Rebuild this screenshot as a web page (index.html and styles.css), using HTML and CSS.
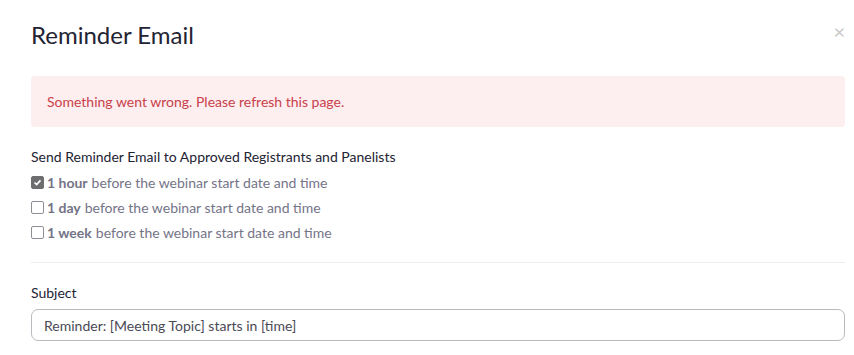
FILE: index.html
```html
<!DOCTYPE html>
<html lang="en">
<head>
    <meta charset="UTF-8">
    <title>Reminder Email</title>
    <link rel="stylesheet" href="styles.css">
</head>
<body>
    <div class="modal">
        <div class="modal-header">
            <h2 class="modal-title">Reminder Email</h2>
            <button class="close" aria-label="Close">&times;</button>
        </div>
        <div class="alert">Something went wrong. Please refresh this page.</div>

        <div class="section">
            <div class="section-label">Send Reminder Email to Approved Registrants and Panelists</div>
            <label class="check-row"><input type="checkbox" checked><b>1 hour</b> before the webinar start date and time</label>
            <label class="check-row"><input type="checkbox"><b>1 day</b> before the webinar start date and time</label>
            <label class="check-row"><input type="checkbox"><b>1 week</b> before the webinar start date and time</label>
        </div>

        <hr class="divider">

        <div class="field">
            <label class="field-label" for="subject">Subject</label>
            <input type="text" id="subject" class="text-input" value="Reminder: [Meeting Topic] starts in [time]">
        </div>
    </div>
</body>
</html>
```

FILE: styles.css
```css
body {
    margin: 0;
    background-color: white;
    font-family: Lato, "Open Sans", sans-serif;
    color: #232333;
}

.modal {
    padding: 0 9px 0 31px;
}

.modal-header {
    display: flex;
    justify-content: space-between;
    align-items: flex-start;
    padding-top: 20px;
}

.modal-title {
    margin: 0;
    font-size: 24px;
    font-weight: 400;
    line-height: 30px;
    color: #232333;
}

.close {
    border: none;
    background: none;
    padding: 0;
    margin-top: 1px;
    font-size: 20px;
    line-height: 20px;
    color: #c8c8c8;
    cursor: pointer;
    font-family: Lato, sans-serif;
}

.alert {
    margin-top: 26px;
    width: 814px;
    box-sizing: border-box;
    padding: 16px;
    background-color: #fdeeef;
    border-radius: 4px;
    color: #c9414b;
    font-size: 14px;
    line-height: 19px;
}

.section {
    margin-top: 20px;
}

.section-label {
    font-size: 14px;
    line-height: 20px;
    color: #232333;
    margin-bottom: 3px;
}

.check-row {
    display: flex;
    align-items: center;
    height: 25px;
    font-size: 14px;
    color: #747487;
}

.check-row b {
    font-weight: 700;
    margin-right: 4px;
}

.check-row input {
    appearance: none;
    width: 13px;
    height: 13px;
    margin: 0 3px 0 0;
    border: 1px solid #8e8e96;
    border-radius: 2px;
    box-sizing: border-box;
    background-color: white;
}

.check-row input:checked {
    background-color: #6e6e70;
    border-color: #6e6e70;
    background-image: url("data:image/svg+xml,%3Csvg xmlns='http://www.w3.org/2000/svg' viewBox='0 0 13 13'%3E%3Cpath d='M3 6.5l2.5 2.5 4.5-5' fill='none' stroke='white' stroke-width='2'/%3E%3C/svg%3E");
}

.divider {
    width: 814px;
    margin: 17px 0 0 0;
    border: none;
    border-top: 1px solid #ededf0;
}

.field {
    margin-top: 20px;
}

.field-label {
    display: block;
    font-size: 14px;
    line-height: 20px;
    color: #232333;
    margin-bottom: 6px;
}

.text-input {
    width: 814px;
    height: 32px;
    box-sizing: border-box;
    border: 1px solid #babac0;
    border-radius: 7px;
    padding: 0 12px;
    font-family: Lato, sans-serif;
    font-size: 14px;
    color: #4a4a55;
}
```
